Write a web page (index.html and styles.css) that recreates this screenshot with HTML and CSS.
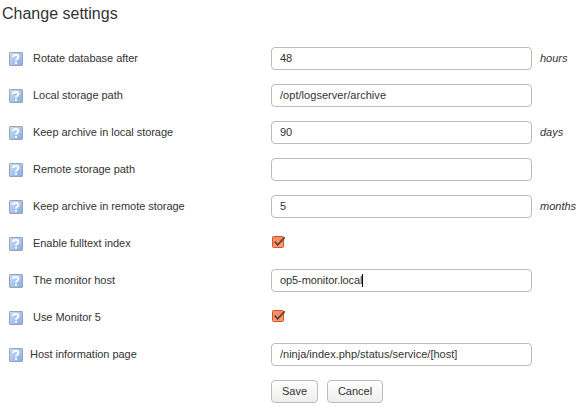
FILE: index.html
```html
<!DOCTYPE html>
<html lang="en">
<head>
<meta charset="utf-8">
<title>Change settings</title>
<link rel="stylesheet" href="styles.css">
</head>
<body>
<svg width="0" height="0" class="defs" aria-hidden="true">
  <defs>
    <linearGradient id="blue" x1="0" y1="0" x2="1" y2="1">
      <stop offset="0" stop-color="#c8e0fa"/><stop offset="1" stop-color="#85ace8"/>
    </linearGradient>
    <linearGradient id="orange" x1="0" y1="0" x2="0" y2="1">
      <stop offset="0" stop-color="#f78a62"/><stop offset="1" stop-color="#fb9c74"/>
    </linearGradient>
    <symbol id="help" viewBox="0 0 14 14">
      <rect x=".5" y=".5" width="13" height="13" rx=".6" fill="url(#blue)" stroke="#a0a4aa"/>
      <path d="M4.1 5V4.4Q4.5 3.1 7 3.1Q9.4 3.1 9.4 5Q9.4 6.2 8.1 6.8Q7 7.4 7 8.8M7 9.9V11.8" fill="none" stroke="#fff" stroke-width="2"/>
    </symbol>
    <symbol id="check" viewBox="0 0 14 13">
      <rect x=".5" y=".5" width="11" height="11" rx="1" fill="url(#orange)" stroke="#d9532a"/>
      <path d="M2.7 5.5L5.6 8.8L12.7 1.4" fill="none" stroke="#684038" stroke-width="1.8"/>
    </symbol>
  </defs>
</svg>
<h1>Change settings</h1>
<form class="settings">
  <div class="row"><svg class="help"><use href="#help"/></svg><span class="label">Rotate database after</span><div class="field">48</div><em>hours</em></div>
  <div class="row"><svg class="help"><use href="#help"/></svg><span class="label">Local storage path</span><div class="field path">/opt/logserver/archive</div></div>
  <div class="row"><svg class="help"><use href="#help"/></svg><span class="label">Keep archive in local storage</span><div class="field">90</div><em>days</em></div>
  <div class="row"><svg class="help"><use href="#help"/></svg><span class="label">Remote storage path</span><div class="field"></div></div>
  <div class="row"><svg class="help"><use href="#help"/></svg><span class="label">Keep archive in remote storage</span><div class="field">5</div><em>months</em></div>
  <div class="row"><svg class="help"><use href="#help"/></svg><span class="label">Enable fulltext index</span><svg class="check"><use href="#check"/></svg></div>
  <div class="row"><svg class="help"><use href="#help"/></svg><span class="label">The monitor host</span><div class="field host">op5-monitor.local<span class="caret"></span></div></div>
  <div class="row"><svg class="help"><use href="#help"/></svg><span class="label">Use Monitor 5</span><svg class="check"><use href="#check"/></svg></div>
  <div class="row"><svg class="help"><use href="#help"/></svg><span class="label wide">Host information page</span><div class="field">/ninja/index.php/status/service/[host]</div></div>
  <div class="actions"><button type="button" class="save">Save</button><button type="button" class="cancel">Cancel</button></div>
</form>
</body>
</html>
```
FILE: styles.css
```css
* { box-sizing: border-box; }

body {
  margin: 0;
  background: #fff;
  color: #333;
  font: 11px/13px "Liberation Sans", Arial, sans-serif;
  overflow: hidden;
}

.defs { display: block; }

h1 {
  margin: 0;
  height: 40px;
  padding: 5px 0 0 2px;
  font-size: 16px;
  line-height: 18px;
  font-weight: normal;
}

.row {
  display: flex;
  align-items: center;
  height: 37px;
  padding-left: 9px;
  white-space: nowrap;
}

.help {
  width: 14px;
  height: 14px;
  margin-top: 1px;
  flex: none;
}

.label {
  width: 238px;
  margin-left: 10px;
  flex: none;
  letter-spacing: -0.04px;
}

.label.wide {
  width: 241px;
  margin-left: 7px;
}

.field {
  display: flex;
  align-items: center;
  width: 261px;
  height: 23px;
  padding: 0 8px;
  flex: none;
  border: 1px solid #bbb;
  border-radius: 4px;
}

.path { letter-spacing: 0.04px; }
.host { letter-spacing: -0.08px; }

.caret {
  width: 1px;
  height: 13px;
  background: #000;
}

em { margin-left: 8px; }

.check {
  width: 14px;
  height: 13px;
  margin: -2px 0 0 1px;
}

.actions {
  display: flex;
  gap: 9px;
  padding: 7px 0 0 271px;
}

button {
  height: 23px;
  padding: 0;
  border: 1px solid #bbb;
  border-radius: 4px;
  background: linear-gradient(#fff, #eee);
  color: #333;
  font: 11px/13px "Liberation Sans", Arial, sans-serif;
}

.save { width: 47px; }
.cancel { width: 56px; }
```
